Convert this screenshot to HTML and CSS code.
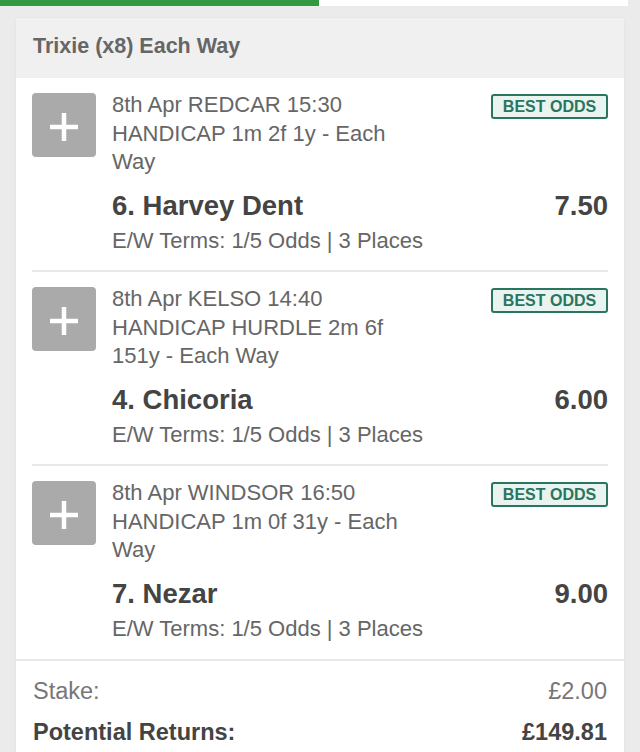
FILE: index.html
```html
<!DOCTYPE html>
<html>
<head>
<meta charset="utf-8">
<link rel="stylesheet" href="styles.css">
</head>
<body>
<div class="progress"><div class="progress-fill"></div><div class="progress-rest"></div></div>
<div class="card">
  <div class="card-header">Trixie (x8) Each Way</div>
  <div class="sel">
    <div class="plus"><svg width="28" height="28" viewBox="0 0 28 28"><path d="M14 0v28M0 14h28" stroke="#fff" stroke-width="4.5"/></svg></div>
    <div class="info">
      <div class="top">
        <div class="desc">8th Apr REDCAR 15:30 HANDICAP 1m 2f 1y - Each Way</div>
        <div class="badge">BEST ODDS</div>
      </div>
      <div class="name-row"><span class="name">6. Harvey Dent</span><span class="odds">7.50</span></div>
      <div class="terms">E/W Terms: 1/5 Odds | 3 Places</div>
    </div>
  </div>
  <div class="sel">
    <div class="plus"><svg width="28" height="28" viewBox="0 0 28 28"><path d="M14 0v28M0 14h28" stroke="#fff" stroke-width="4.5"/></svg></div>
    <div class="info">
      <div class="top">
        <div class="desc">8th Apr KELSO 14:40 HANDICAP HURDLE 2m 6f 151y - Each Way</div>
        <div class="badge">BEST ODDS</div>
      </div>
      <div class="name-row"><span class="name">4. Chicoria</span><span class="odds">6.00</span></div>
      <div class="terms">E/W Terms: 1/5 Odds | 3 Places</div>
    </div>
  </div>
  <div class="sel sel-last">
    <div class="plus"><svg width="28" height="28" viewBox="0 0 28 28"><path d="M14 0v28M0 14h28" stroke="#fff" stroke-width="4.5"/></svg></div>
    <div class="info">
      <div class="top">
        <div class="desc">8th Apr WINDSOR 16:50 HANDICAP 1m 0f 31y - Each Way</div>
        <div class="badge">BEST ODDS</div>
      </div>
      <div class="name-row"><span class="name">7. Nezar</span><span class="odds">9.00</span></div>
      <div class="terms">E/W Terms: 1/5 Odds | 3 Places</div>
    </div>
  </div>
  <div class="summary">
    <div class="sum-row stake"><span>Stake:</span><span>£2.00</span></div>
    <div class="sum-row returns"><span>Potential Returns:</span><span>£149.81</span></div>
  </div>
</div>
</body>
</html>
```

FILE: styles.css
```css
* { box-sizing: border-box; }
html, body { margin: 0; padding: 0; }
body {
  background: #ebebeb;
  font-family: "Liberation Sans", Arial, sans-serif;
  width: 640px;
  height: 752px;
  overflow: hidden;
}
.progress { display: flex; height: 6px; }
.progress-fill { width: 319px; background: #2f9a40; }
.progress-rest { width: 309px; background: #fff; }
.card {
  margin: 12px 16px 0 16px;
  background: #fff;
  border-radius: 3px;
  box-shadow: 0 0 2px rgba(0,0,0,0.08);
  overflow: hidden;
}
.card-header {
  height: 60px;
  background: #f0f0f0;
  color: #666;
  font-weight: bold;
  font-size: 21.5px;
  padding: 16px 0 0 17px;
}
.sel {
  margin: 0 16px;
  display: flex;
  gap: 16px;
  padding: 16px 0 15.5px;
  border-bottom: 2px solid #e8e8e8;
}
.sel-last { margin: 0; padding-left: 16px; padding-right: 16px; padding-bottom: 16px; }
.plus {
  flex: none;
  width: 64px;
  height: 64px;
  margin-top: -1px;
  background: #aaa;
  border-radius: 4px;
  display: flex;
  align-items: center;
  justify-content: center;
}
.plus svg { margin-top: 3px; }
.info { flex: 1; min-width: 0; }
.top { display: flex; justify-content: space-between; align-items: flex-start; }
.desc {
  margin-top: -3px;
  width: 300px;
  font-size: 22px;
  line-height: 28.5px;
  color: #666;
}
.badge {
  width: 117px;
  height: 25px;
  border: 2px solid #2a7560;
  border-radius: 3px;
  background: #e9f3ef;
  color: #2a7560;
  font-weight: bold;
  font-size: 16px;
  text-align: center;
  line-height: 21px;
}
.name-row {
  margin-top: 13px;
  display: flex;
  justify-content: space-between;
  align-items: center;
  height: 32px;
  font-weight: bold;
  font-size: 27.5px;
  color: #444;
}
.terms {
  margin-top: 5px;
  font-size: 22px;
  line-height: 28px;
  color: #666;
}
.summary { padding: 16px 17px 20px 17px; }
.sum-row { display: flex; justify-content: space-between; font-size: 23.5px; }
.stake { color: #777; line-height: 28px; }
.returns { margin-top: 13px; font-weight: bold; color: #444; line-height: 28px; }
```
